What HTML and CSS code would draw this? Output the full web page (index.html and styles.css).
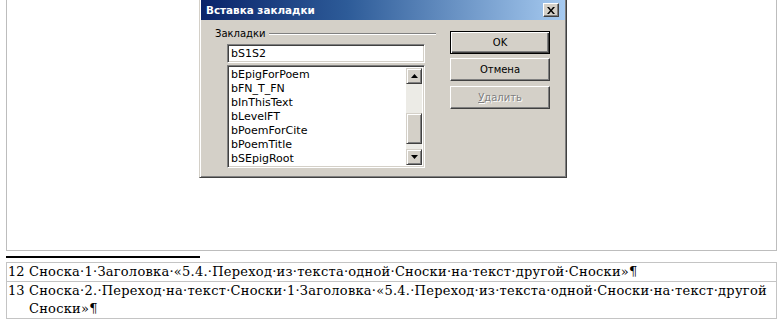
FILE: index.html
```html
<!DOCTYPE html>
<html lang="ru">
<head>
<meta charset="utf-8">
<link rel="stylesheet" href="styles.css">
</head>
<body>
<div class="page">
  <div class="sheet"></div>
  <div class="rule"></div>
  <div class="notes">
    <div class="note">
      <span class="num">12</span>
      <span class="txt">Сноска·1·Заголовка·«5.4.·Переход·из·текста·одной·Сноски·на·текст·другой·Сноски»¶</span>
    </div>
    <div class="note">
      <span class="num">13</span>
      <span class="txt">Сноска·2.·Переход·на·текст·Сноски·1·Заголовка·«5.4.·Переход·из·текста·одной·Сноски·на·текст·другой<br>Сноски»¶</span>
    </div>
  </div>

  <div class="dialog">
    <div class="titlebar">
      <span class="title">Вставка закладки</span>
      <span class="close">
        <svg width="8" height="7" viewBox="0 0 8 7"><path d="M0 0h2l2 2.5L6 0h2L5 3.5 8 7H6L4 4.5 2 7H0l3-3.5z" fill="#000"/></svg>
      </span>
    </div>
    <div class="body">
      <div class="group">
        <div class="legend"><span>Закладки</span><i class="etch"></i></div>
        <div class="field">bS1S2</div>
        <div class="list">
          <ul class="items">
            <li>bEpigForPoem</li>
            <li>bFN_T_FN</li>
            <li>bInThisText</li>
            <li>bLevelFT</li>
            <li>bPoemForCite</li>
            <li>bPoemTitle</li>
            <li>bSEpigRoot</li>
          </ul>
          <div class="scroll">
            <div class="sbtn"><svg width="7" height="4" viewBox="0 0 7 4"><path d="M3.5 0L7 4H0z" fill="#000"/></svg></div>
            <div class="track top"></div>
            <div class="thumb"></div>
            <div class="track bottom"></div>
            <div class="sbtn"><svg width="7" height="4" viewBox="0 0 7 4"><path d="M0 0h7L3.5 4z" fill="#000"/></svg></div>
          </div>
        </div>
      </div>
      <div class="buttons">
        <div class="btn default"><span>OK</span></div>
        <div class="btn"><span>Отмена</span></div>
        <div class="btn disabled"><span><u>У</u>далить</span></div>
      </div>
    </div>
  </div>
</div>
</body>
</html>
```

FILE: styles.css
```css
* { box-sizing: border-box; }
html, body { margin: 0; padding: 0; background: #fff; }
body { width: 779px; height: 328px; overflow: hidden; }

.page { position: relative; width: 779px; height: 328px; }

.sheet {
  margin-left: 6px;
  width: 771px;
  height: 251px;
  border: 1px solid #bdbdbd;
  border-top: none;
}

.rule {
  margin: 5px 0 0 6px;
  width: 194px;
  height: 2px;
  background: #000;
}

.notes {
  margin: 4px 0 0 6px;
  width: 771px;
  border: 1px solid #c4c4c4;
  font-family: "DejaVu Serif", serif;
  font-size: 13px;
  letter-spacing: 0.25px;
  color: #000;
}
.note {
  display: flex;
  line-height: 18px;
}
.note + .note { border-top: 1px solid #c4c4c4; }
.num { width: 22px; padding-left: 1px; flex: none; letter-spacing: 0; }
.txt { flex: 1; color: #000; }

/* dialog */
.dialog {
  position: absolute;
  left: 199px;
  top: -2px;
  width: 368px;
  height: 180px;
  background: #d4d0c8;
  border: 1px solid;
  border-color: #d4d0c8 #404040 #404040 #d4d0c8;
  box-shadow: inset 1px 1px 0 #fff, inset -1px -1px 0 #808080;
  padding: 1px;
  font-family: "DejaVu Sans", sans-serif;
  font-size: 11px;
  color: #000;
}
.titlebar {
  height: 20px;
  background: linear-gradient(to right, #0a246a 0%, #2d5b98 40%, #a6caf0 100%);
  display: flex;
  align-items: center;
  justify-content: space-between;
  padding: 0 6px 0 5px;
}
.title {
  color: #fff;
  font-weight: bold;
  font-size: 10.4px;
}
.close {
  width: 16px;
  height: 14px;
  background: #d4d0c8;
  border: 1px solid;
  border-color: #fff #404040 #404040 #fff;
  box-shadow: inset -1px -1px 0 #808080;
  display: flex;
  align-items: center;
  justify-content: center;
}

.body {
  display: flex;
  padding: 0 0 0 6px;
}
.group { width: 229px; padding-top: 7px; }
.legend {
  display: flex;
  align-items: center;
  height: 13px;
  padding-left: 8px;
  font-size: 10px;
}
.legend span { padding-right: 3px; }
.etch {
  flex: 1;
  height: 2px;
  border-top: 1px solid #808080;
  border-bottom: 1px solid #fff;
}
.field {
  margin: 4px 0 0 20px;
  width: 198px;
  height: 19px;
  background: #fff;
  border: 1px solid;
  border-color: #808080 #fff #fff #808080;
  box-shadow: inset 1px 1px 0 #404040, inset -1px -1px 0 #d4d0c8;
  padding: 2px 0 0 3px;
  line-height: 14px;
}
.list {
  margin: 2px 0 0 20px;
  width: 198px;
  height: 103px;
  background: #fff;
  border: 1px solid;
  border-color: #808080 #fff #fff #808080;
  box-shadow: inset 1px 1px 0 #404040, inset -1px -1px 0 #d4d0c8;
  padding: 2px;
  display: flex;
}
.items {
  list-style: none;
  margin: 0;
  padding: 0 0 0 1px;
  flex: 1;
  line-height: 14px;
}
.scroll {
  width: 16px;
  display: flex;
  flex-direction: column;
}
.sbtn {
  height: 16px;
  background: #d4d0c8;
  border: 1px solid;
  border-color: #d4d0c8 #404040 #404040 #d4d0c8;
  box-shadow: inset 1px 1px 0 #fff, inset -1px -1px 0 #808080;
  display: flex;
  align-items: center;
  justify-content: center;
}
.track { background: #ecebe6; }
.track.top { height: 30px; }
.track.bottom { height: 5px; }
.thumb {
  height: 32px;
  background: #d4d0c8;
  border: 1px solid;
  border-color: #d4d0c8 #404040 #404040 #d4d0c8;
  box-shadow: inset 1px 1px 0 #fff, inset -1px -1px 0 #808080;
}

.buttons {
  margin-left: 14px;
  padding-top: 11px;
  display: flex;
  flex-direction: column;
  font-size: 10px;
}
.btn {
  width: 100px;
  height: 23px;
  background: #d4d0c8;
  border: 1px solid;
  border-color: #fff #404040 #404040 #fff;
  box-shadow: inset -1px -1px 0 #808080;
  display: flex;
  align-items: center;
  justify-content: center;
  margin-bottom: 4px;
}
.btn.default {
  border: 1px solid #000;
  box-shadow: inset 1px 1px 0 #fff, inset -1px -1px 0 #404040, inset -2px -2px 0 #808080;
}
.btn.disabled { margin-top: 1px; }
.btn.disabled span {
  color: #808080;
  text-shadow: 1px 1px 0 #fff;
}
.btn u { text-decoration: underline; }
```
